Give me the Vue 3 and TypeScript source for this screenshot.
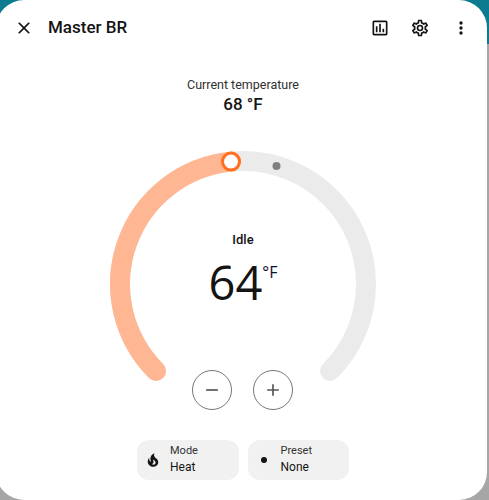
<script setup lang="ts">
const CX = 140;
const CY = 137;
const R = 123;

function point(deg: number) {
  const a = (deg * Math.PI) / 180;
  return { x: CX + R * Math.sin(a), y: CY - R * Math.cos(a) };
}

function arc(from: number, to: number) {
  const a = point(from);
  const b = point(to);
  const large = to - from > 180 ? 1 : 0;
  return `M${a.x.toFixed(2)} ${a.y.toFixed(2)}A${R} ${R} 0 ${large} 1 ${b.x.toFixed(2)} ${b.y.toFixed(2)}`;
}

const track = arc(-135, 135);
const progress = arc(-135, -5.6);
const handle = point(-5.6);
const current = { x: 173.5, y: 19 };

const MDI = {
  close: "M19,6.41L17.59,5L12,10.59L6.41,5L5,6.41L10.59,12L5,17.59L6.41,19L12,13.41L17.59,19L19,17.59L13.41,12L19,6.41Z",
  chart: "M9 17H7V10H9V17M13 17H11V7H13V17M17 17H15V13H17V17M19 19H5V5H19V19.1M19 3H5C3.9 3 3 3.9 3 5V19C3 20.1 3.9 21 5 21H19C20.1 21 21 20.1 21 19V5C21 3.9 20.1 3 19 3Z",
  cog: "M12,8A4,4 0 0,1 16,12A4,4 0 0,1 12,16A4,4 0 0,1 8,12A4,4 0 0,1 12,8M12,10A2,2 0 0,0 10,12A2,2 0 0,0 12,14A2,2 0 0,0 14,12A2,2 0 0,0 12,10M10,22C9.75,22 9.54,21.82 9.5,21.58L9.13,18.93C8.5,18.68 7.96,18.34 7.44,17.94L4.95,18.95C4.73,19.03 4.46,18.95 4.34,18.73L2.34,15.27C2.21,15.05 2.27,14.78 2.46,14.63L4.57,12.97L4.5,12L4.57,11L2.46,9.37C2.27,9.22 2.21,8.95 2.34,8.73L4.34,5.27C4.46,5.05 4.73,4.96 4.95,5.05L7.44,6.05C7.96,5.66 8.5,5.32 9.13,5.07L9.5,2.42C9.54,2.18 9.75,2 10,2H14C14.25,2 14.46,2.18 14.5,2.42L14.87,5.07C15.5,5.32 16.04,5.66 16.56,6.05L19.05,5.05C19.27,4.96 19.54,5.05 19.66,5.27L21.66,8.73C21.79,8.95 21.73,9.22 21.54,9.37L19.43,11L19.5,12L19.43,13L21.54,14.63C21.73,14.78 21.79,15.05 21.66,15.27L19.66,18.73C19.54,18.95 19.27,19.04 19.05,18.95L16.56,17.95C16.04,18.34 15.5,18.68 14.87,18.93L14.5,21.58C14.46,21.82 14.25,22 14,22H10M11.25,4L10.88,6.61C9.68,6.86 8.62,7.5 7.85,8.39L5.44,7.35L4.69,8.65L6.8,10.2C6.4,11.37 6.4,12.64 6.8,13.8L4.68,15.36L5.43,16.66L7.86,15.62C8.63,16.5 9.68,17.14 10.87,17.38L11.24,20H12.76L13.13,17.39C14.32,17.14 15.37,16.5 16.14,15.62L18.57,16.66L19.32,15.36L17.2,13.81C17.6,12.64 17.6,11.37 17.2,10.2L19.31,8.65L18.56,7.35L16.15,8.39C15.38,7.5 14.32,6.86 13.12,6.62L12.75,4H11.25Z",
  dots: "M12,16A2,2 0 0,1 14,18A2,2 0 0,1 12,20A2,2 0 0,1 10,18A2,2 0 0,1 12,16M12,10A2,2 0 0,1 14,12A2,2 0 0,1 12,14A2,2 0 0,1 10,12A2,2 0 0,1 12,10M12,4A2,2 0 0,1 14,6A2,2 0 0,1 12,8A2,2 0 0,1 10,6A2,2 0 0,1 12,4Z",
  minus: "M19,13H5V11H19V13Z",
  plus: "M19,13H13V19H11V13H5V11H11V5H13V11H19V13Z",
  fire: "M17.66 11.2C17.43 10.9 17.15 10.64 16.89 10.38C16.22 9.78 15.46 9.35 14.82 8.72C13.33 7.26 13 4.85 13.95 3C13 3.23 12.17 3.75 11.46 4.32C8.87 6.4 7.85 10.07 9.07 13.22C9.11 13.32 9.15 13.42 9.15 13.55C9.15 13.77 9 13.97 8.8 14.05C8.57 14.15 8.33 14.09 8.14 13.93C8.08 13.88 8.04 13.83 8 13.76C6.87 12.33 6.69 10.28 7.45 8.64C5.78 10 4.87 12.3 5 14.47C5.06 14.97 5.12 15.47 5.29 15.97C5.43 16.57 5.7 17.17 6 17.7C7.08 19.43 8.95 20.67 10.96 20.92C13.1 21.19 15.39 20.8 17.03 19.32C18.86 17.66 19.5 15 18.56 12.72L18.43 12.46C18.22 12 17.66 11.2 17.66 11.2M14.5 17.5C14.22 17.74 13.76 18 13.4 18.1C12.28 18.5 11.16 17.94 10.5 17.28C11.69 17 12.4 16.12 12.61 15.23C12.78 14.43 12.46 13.77 12.33 13C12.21 12.26 12.23 11.63 12.5 10.94C12.69 11.32 12.89 11.7 13.13 12C13.9 13 15.11 13.44 15.37 14.8C15.41 14.94 15.43 15.08 15.43 15.23C15.46 16.05 15.1 16.95 14.5 17.5H14.5Z",
  dot: "M12,8A4,4 0 0,0 8,12A4,4 0 0,0 12,16A4,4 0 0,0 16,12A4,4 0 0,0 12,8Z",
};
</script>

<template>
  <div class="dialog">
    <header class="topbar">
      <svg class="icon" viewBox="0 0 24 24"><path :d="MDI.close" /></svg>
      <h1 class="title">Master BR</h1>
      <div class="actions">
        <svg class="icon" viewBox="0 0 24 24"><path :d="MDI.chart" /></svg>
        <svg class="icon" viewBox="0 0 24 24"><path :d="MDI.cog" /></svg>
        <svg class="icon" viewBox="0 0 24 24"><path :d="MDI.dots" /></svg>
      </div>
    </header>

    <main class="content">
      <div class="current">
        <div class="current-label">Current temperature</div>
        <div class="current-value">68 °F</div>
      </div>

      <div class="dial">
        <svg class="gauge" width="280" height="240" viewBox="0 0 280 240">
          <path class="track" :d="track" />
          <path class="progress" :d="progress" />
          <circle class="current-dot" :cx="current.x" :cy="current.y" r="4" />
          <circle class="handle" :cx="handle.x" :cy="handle.y" r="8.5" />
        </svg>
        <div class="readout">
          <div class="state">Idle</div>
          <div class="target">64<span class="unit">°F</span></div>
        </div>
      </div>

      <div class="steppers">
        <button class="step"><svg class="icon step-icon" viewBox="0 0 24 24"><path :d="MDI.minus" /></svg></button>
        <button class="step"><svg class="icon step-icon" viewBox="0 0 24 24"><path :d="MDI.plus" /></svg></button>
      </div>

      <div class="chips">
        <div class="chip">
          <svg class="chip-icon" viewBox="0 0 24 24"><path :d="MDI.fire" /></svg>
          <div>
            <div class="chip-label">Mode</div>
            <div class="chip-value">Heat</div>
          </div>
        </div>
        <div class="chip">
          <svg class="chip-icon" viewBox="0 0 24 24"><path :d="MDI.dot" /></svg>
          <div>
            <div class="chip-label">Preset</div>
            <div class="chip-value">None</div>
          </div>
        </div>
      </div>
    </main>
  </div>
</template>

<style scoped>
.dialog {
  width: 491px;
  height: 500px;
  margin-left: -4px;
  box-sizing: border-box;
  background: #fff;
  border-radius: 28px;
  color: #141414;
  font-family: Roboto, sans-serif;
  display: flex;
  flex-direction: column;
}

.topbar {
  display: flex;
  align-items: center;
  height: 56px;
  padding: 0 16.5px 0 18px;
  flex-shrink: 0;
}

.icon {
  width: 20px;
  height: 20px;
  fill: #141414;
  display: block;
}

.title {
  margin: 0 0 2px 14px;
  font-size: 17px;
  font-weight: 500;
  line-height: 24px;
}

.actions {
  margin-left: auto;
  display: flex;
  gap: 20.5px;
}

.content {
  padding: 20px 1px 0 4px;
  display: flex;
  flex-direction: column;
  align-items: center;
}

.current {
  text-align: center;
}

.current-label {
  font-size: 12.5px;
  line-height: 17px;
  color: #303030;
}

.current-value {
  font-size: 17px;
  font-weight: 500;
  line-height: 22px;
}

.dial {
  position: relative;
  width: 280px;
  height: 240px;
  margin-top: 32px;
}

.gauge {
  display: block;
}

.track,
.progress {
  fill: none;
  stroke-width: 20px;
  stroke-linecap: round;
}

.track {
  stroke: #ebebeb;
}

.progress {
  stroke: #ffb793;
}

.current-dot {
  fill: #808080;
}

.handle {
  fill: #fff;
  stroke: #ff6f1f;
  stroke-width: 3px;
}

.readout {
  position: absolute;
  top: 83px;
  left: 0;
  right: 0;
  text-align: center;
}

.state {
  font-size: 13px;
  font-weight: 500;
  line-height: 20px;
}

.target {
  font-family: "Open Sans", sans-serif;
  font-size: 47px;
  line-height: 60px;
  margin-top: 2px;
}

.unit {
  font-size: 16px;
  line-height: 20px;
  color: #101030;
  vertical-align: 22px;
}

.steppers {
  display: flex;
  gap: 21px;
  margin: -17px 0 0 -1px;
}

.step {
  width: 40px;
  height: 40px;
  padding: 0;
  border: 1px solid #767676;
  border-radius: 50%;
  background: #fff;
  display: flex;
  align-items: center;
  justify-content: center;
}

.step-icon {
  fill: #555;
}

.chips {
  display: flex;
  gap: 9px;
  margin-top: 30px;
}

.chip {
  width: 101.5px;
  height: 40px;
  background: #f1f1f1;
  border-radius: 12px;
  display: flex;
  align-items: center;
  gap: 8px;
  padding-left: 7px;
  box-sizing: border-box;
}

.chip-icon {
  width: 18px;
  height: 18px;
  fill: #141414;
  flex-shrink: 0;
}

.chip-label {
  font-size: 11px;
  line-height: 14px;
  color: #333;
}

.chip-value {
  font-size: 12px;
  line-height: 17px;
  margin-top: 1px;
}
</style>

<style>
html,
body {
  margin: 0;
  height: 500px;
  overflow: hidden;
  background: linear-gradient(#0b7b90 0 44px, #a6a6a6 44px);
}
</style>
